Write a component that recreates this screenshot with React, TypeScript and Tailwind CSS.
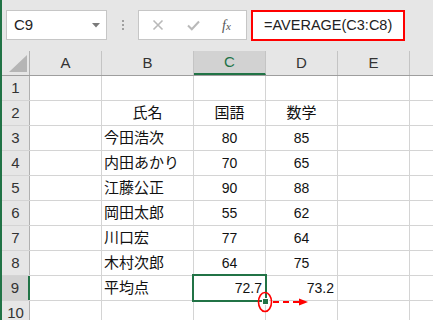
import React from "react";

const FONT = { fontFamily: '"Liberation Sans", "Noto Sans CJK JP", sans-serif' };

type Cell = { t?: string; align?: "l" | "c" | "r"; num?: boolean };

const rows: Cell[][] = [
  [{}, {}, {}, {}, {}],
  [{}, { t: "氏名", align: "c" }, { t: "国語", align: "c" }, { t: "数学", align: "c" }, {}],
  [{}, { t: "今田浩次" }, { t: "80", align: "c", num: true }, { t: "85", align: "c", num: true }, {}],
  [{}, { t: "内田あかり" }, { t: "70", align: "c", num: true }, { t: "65", align: "c", num: true }, {}],
  [{}, { t: "江藤公正" }, { t: "90", align: "c", num: true }, { t: "88", align: "c", num: true }, {}],
  [{}, { t: "岡田太郎" }, { t: "55", align: "c", num: true }, { t: "62", align: "c", num: true }, {}],
  [{}, { t: "川口宏" }, { t: "77", align: "c", num: true }, { t: "64", align: "c", num: true }, {}],
  [{}, { t: "木村次郎" }, { t: "64", align: "c", num: true }, { t: "75", align: "c", num: true }, {}],
  [{}, { t: "平均点" }, { t: "72.7", align: "r", num: true }, { t: "73.2", align: "r", num: true }, {}],
  [{}, {}, {}, {}, {}],
];

const widths = ["w-[72px]", "w-[92px]", "w-[72px]", "w-[72px]", "w-[72px]"];
const letters = ["A", "B", "C", "D", "E"];

function DataCell({ c, w }: { c: Cell; w: string }) {
  const al =
    c.align === "c" ? "justify-center" : c.align === "r" ? "justify-end pr-[3px]" : "justify-start pl-[2px]";
  return (
    <div
      className={`${w} h-full shrink-0 border-r border-[#d4d4d4] flex items-center ${al} ${
        c.num ? "text-[14px]" : "text-[15px]"
      } text-[#111]`}
    >
      {c.t}
    </div>
  );
}

export default function App() {
  return (
    <div className="relative w-[433px] h-[320px] overflow-hidden bg-white flex" style={FONT}>
      <div className="w-[2px] h-full bg-[#217346] shrink-0" />
      <div className="flex-1 flex flex-col">
        {/* toolbar */}
        <div className="h-[51px] shrink-0 bg-[#e6e6e6] flex items-start pt-[10px]">
          <div className="ml-[4px] w-[101px] h-[30px] bg-white border border-[#c6c6c6] flex items-center pl-[7px] pr-[6px] justify-between">
            <span className="text-[15px] text-[#222]">C9</span>
            <svg width="8" height="5" viewBox="0 0 8 5">
              <polygon points="0,0 8,0 4,4.5" fill="#7a7a7a" />
            </svg>
          </div>
          <div className="w-[31px] h-[30px] flex flex-col items-center justify-center gap-[2px]">
            <div className="w-[2px] h-[2px] bg-[#a0a0a0]" />
            <div className="w-[2px] h-[2px] bg-[#a0a0a0]" />
            <div className="w-[2px] h-[2px] bg-[#a0a0a0]" />
          </div>
          <div className="w-[109px] h-[30px] bg-white border border-[#c6c6c6] flex items-center">
            <svg className="ml-[13px]" width="12" height="12" viewBox="0 0 12 12">
              <path d="M1.5 1.5 L10.5 10.5 M10.5 1.5 L1.5 10.5" stroke="#b9b9b9" strokeWidth="1.6" />
            </svg>
            <svg className="ml-[23px]" width="13" height="11" viewBox="0 0 13 11">
              <path d="M1 5.5 L4.8 9.3 L12 1.5" stroke="#b9b9b9" strokeWidth="2" fill="none" />
            </svg>
            <span
              className="ml-[22px] text-[14px] italic text-[#555]"
              style={{ fontFamily: '"Liberation Serif", serif' }}
            >
              f<span className="text-[11px]">x</span>
            </span>
          </div>
          <div className="ml-[4px] w-[154px] h-[31px] bg-white border-2 border-[#ff0000] flex items-center pl-[11px]">
            <span className="text-[14.5px] text-[#222]">=AVERAGE(C3:C8)</span>
          </div>
        </div>
        {/* header row */}
        <div className="h-[25px] shrink-0 flex bg-[#e6e6e6] border-b border-[#9e9e9e]">
          <div className="w-[28px] h-full shrink-0 border-r border-[#b0b0b0] relative">
            <svg className="absolute left-[7px] top-[4px]" width="18" height="17" viewBox="0 0 18 17">
              <polygon points="0,17 18,17 18,0" fill="#b5b5b5" />
            </svg>
          </div>
          {letters.map((l, i) => (
            <div
              key={l}
              className={`${widths[i]} h-full shrink-0 border-r border-[#c4c4c4] flex items-center justify-center text-[15px] ${
                l === "C" ? "bg-[#d2d2d2] text-[#217346] border-b-2 border-b-[#217346]" : "text-[#333]"
              }`}
            >
              {l}
            </div>
          ))}
          <div className="flex-1" />
        </div>
        {/* data rows */}
        {rows.map((r, ri) => {
          const sel = ri === 8;
          return (
            <div key={ri} className="h-[25px] shrink-0 flex border-b border-[#d4d4d4]">
              <div
                className={`w-[28px] h-full shrink-0 flex items-center justify-center text-[15px] text-[#333] ${
                  sel ? "bg-[#d2d2d2] border-r-2 border-[#217346]" : "bg-[#e6e6e6] border-r border-[#b0b0b0]"
                }`}
              >
                {ri + 1}
              </div>
              {r.map((c, ci) => (
                <DataCell key={ci} c={c} w={widths[ci]} />
              ))}
              <div className="flex-1" />
            </div>
          );
        })}
      </div>
      {/* selection overlay */}
      <div className="absolute left-[192px] top-[274px] w-[75px] h-[28px] border-2 border-[#217346]" />
      <div className="absolute left-[262px] top-[298px] w-[7px] h-[7px] bg-[#217346] border border-white" />
      <svg className="absolute left-[257px] top-[291px]" width="16" height="22" viewBox="0 0 16 22">
        <ellipse cx="8" cy="11" rx="6.5" ry="9.5" fill="none" stroke="#ff0000" strokeWidth="1.6" />
      </svg>
      <svg className="absolute left-[272px] top-[296px]" width="40" height="12" viewBox="0 0 40 12">
        <line x1="1" y1="6" x2="28" y2="6" stroke="#ff0000" strokeWidth="2" strokeDasharray="6 4" />
        <polygon points="27,2.5 36,6 27,9.5" fill="#ff0000" />
      </svg>
    </div>
  );
}
